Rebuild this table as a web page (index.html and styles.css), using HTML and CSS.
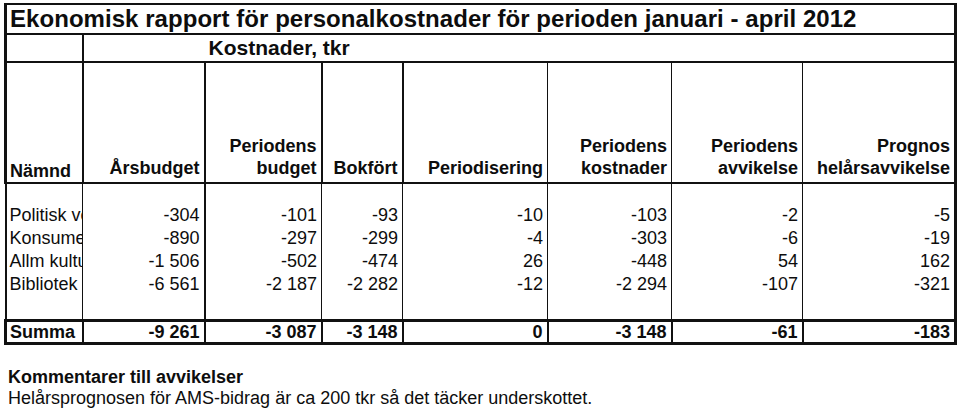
FILE: index.html
```html
<!DOCTYPE html>
<html lang="sv">
<head>
<meta charset="utf-8">
<title>Ekonomisk rapport</title>
<link rel="stylesheet" href="styles.css">
</head>
<body>
<table class="report">
  <colgroup>
    <col class="c1"><col class="c2"><col class="c3"><col class="c4"><col class="c5"><col class="c6"><col class="c7"><col class="c8">
  </colgroup>
  <tr class="title-row"><td colspan="8" class="title">Ekonomisk rapport för personalkostnader för perioden januari - april 2012</td></tr>
  <tr class="sub-row"><td class="blank"></td><td colspan="7" class="kost">Kostnader, tkr</td></tr>
  <tr class="head-row">
    <th class="name">Nämnd</th>
    <th>Årsbudget</th>
    <th>Periodens<br>budget</th>
    <th>Bokfört</th>
    <th>Periodisering</th>
    <th>Periodens<br>kostnader</th>
    <th>Periodens<br>avvikelse</th>
    <th>Prognos<br>helårsavvikelse</th>
  </tr>
  <tr class="data first">
    <td class="name">Politisk verksamhet</td><td>-304</td><td>-101</td><td>-93</td><td>-10</td><td>-103</td><td>-2</td><td>-5</td>
  </tr>
  <tr class="data">
    <td class="name">Konsumentvägledning</td><td>-890</td><td>-297</td><td>-299</td><td>-4</td><td>-303</td><td>-6</td><td>-19</td>
  </tr>
  <tr class="data">
    <td class="name">Allm kulturverksamhet</td><td>-1 506</td><td>-502</td><td>-474</td><td>26</td><td>-448</td><td>54</td><td>162</td>
  </tr>
  <tr class="data last">
    <td class="name">Bibliotek</td><td>-6 561</td><td>-2 187</td><td>-2 282</td><td>-12</td><td>-2 294</td><td>-107</td><td>-321</td>
  </tr>
  <tr class="sum-row">
    <td class="name">Summa</td><td>-9 261</td><td>-3 087</td><td>-3 148</td><td>0</td><td>-3 148</td><td>-61</td><td>-183</td>
  </tr>
</table>
<div class="comments">
  <p class="c-title">Kommentarer till avvikelser</p>
  <p class="c-text">Helårsprognosen för AMS-bidrag är ca 200 tkr så det täcker underskottet.</p>
</div>
</body>
</html>
```
FILE: styles.css
```css
html, body {
  margin: 0;
  background: #fff;
}
body {
  padding: 3px 4px 0 4px;
  font-family: "Liberation Sans", Arial, sans-serif;
  color: #0d0d0d;
}
.report {
  border-collapse: collapse;
  table-layout: fixed;
  width: 952px;
}
.c1 { width: 77px; }
.c2 { width: 122px; }
.c3 { width: 117px; }
.c4 { width: 81px; }
.c5 { width: 145px; }
.c6 { width: 124px; }
.c7 { width: 131px; }
.c8 { width: 153px; }

.report td, .report th {
  padding: 0 4px 0 0;
  text-align: right;
  white-space: nowrap;
  overflow: hidden;
  font-size: 18px;
}

.report .title {
  text-align: left;
  font-size: 24px;
  font-weight: bold;
  height: 28px;
  line-height: 28px;
  padding: 0 0 0 3px;
  border-top: 2px solid #111;
  border-left: 3px solid #111;
  border-right: 3px solid #111;
  border-bottom: 2px solid #111;
  letter-spacing: 0.05px;
}

.sub-row td {
  height: 26px;
  border-bottom: 2px solid #111;
}
.sub-row .blank {
  border-left: 3px solid #111;
  border-right: 2px solid #111;
}
.report .kost {
  text-align: left;
  font-size: 21px;
  font-weight: bold;
  padding-left: 125px;
  line-height: 26px;
  border-right: 3px solid #111;
}

.head-row th {
  height: 116px;
  vertical-align: bottom;
  font-weight: bold;
  line-height: 22px;
  padding-bottom: 3px;
  border-right: 2px solid #111;
  border-bottom: 2px solid #111;
}
.head-row th:nth-child(5),
.head-row th:nth-child(6),
.head-row th:nth-child(7) {
  border-right-width: 1px;
}
.head-row th:first-child { border-left: 3px solid #111; }
.head-row th:last-child { border-right: 3px solid #111; }

.report .name {
  text-align: left;
  padding: 0 0 0 3px;
  text-overflow: clip;
}

.data td {
  height: 23px;
  line-height: 23px;
  border-right: 1px solid #111;
  font-weight: normal;
}
.data td:nth-child(2) { border-right-width: 2px; }
.data td:first-child { border-left: 2px solid #111; }
.data td:last-child { border-right: 3px solid #111; }
.data.first td { padding-top: 20px; }
.data.last td { padding-bottom: 23px; }

.sum-row td {
  height: 20px;
  line-height: 20px;
  font-weight: bold;
  border: 3px solid #111;
  border-left-width: 2px;
  border-right-width: 2px;
}
.sum-row td:first-child { border-left-width: 3px; }
.sum-row td:last-child { border-right-width: 3px; }

.comments {
  margin-top: 22px;
  padding-left: 4px;
}
.comments p {
  margin: 0;
  font-size: 18px;
  line-height: 21px;
}
.c-title { font-weight: bold; }
```
